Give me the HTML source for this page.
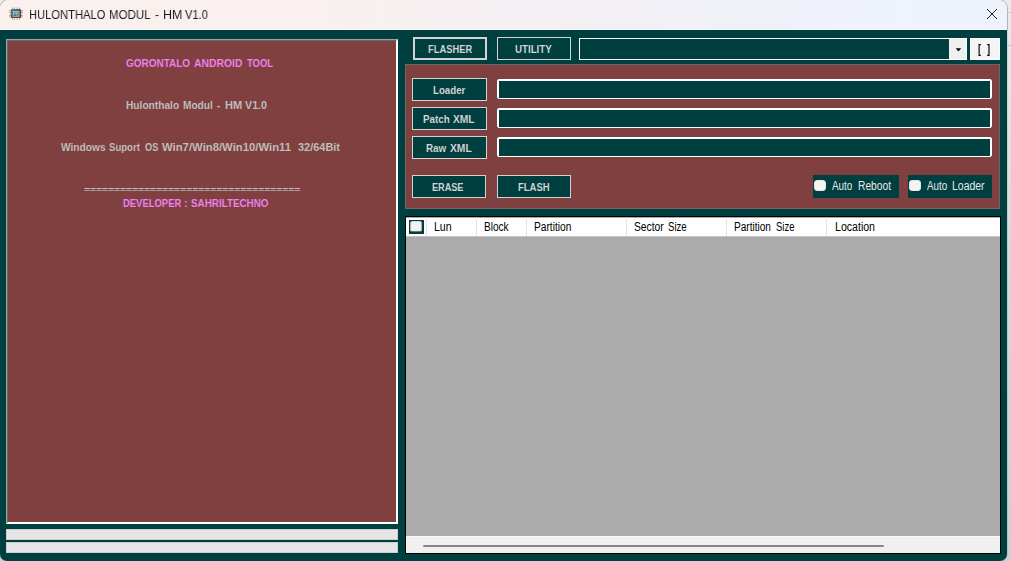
<!DOCTYPE html>
<html lang="en">
<head>
<meta charset="utf-8">
<title>HULONTHALO MODUL - HM V1.0</title>
<style>
*{box-sizing:border-box;margin:0;padding:0}
html,body{width:1011px;height:561px;overflow:hidden}
body{position:relative;background:linear-gradient(180deg,#ebebeb 0%,#e2e2e2 22%,#d8d8d8 50%,#d3d3d3 80%,#d0d0d0 100%);font-family:"Liberation Sans",sans-serif}
.abs{position:absolute}
#win{position:absolute;left:0;top:0;width:1007px;height:561px;background:linear-gradient(180deg,#f4f1f5 0,#f4f1f5 29px,#003f40 29px);border-radius:9px 8.5px 7px 7px;overflow:hidden}
#title{position:absolute;left:0;top:0;width:1007px;height:30px;background:linear-gradient(90deg,#faf1ee 0%,#f9f0ef 30%,#f4f0f4 55%,#eff2fa 80%,#eef3fb 100%);border-bottom:1px solid #fcfbfb}
.t{position:absolute;white-space:pre;transform-origin:0 0;display:block;line-height:1}
.b{font-weight:bold}
.g{will-change:transform}
.m{-webkit-text-stroke:0.08px #804040}
.k{-webkit-text-stroke:0.05px #003f40}
/* left panel */
#lp{position:absolute;left:6px;top:39px;width:392px;height:485px;background:#804040;border-style:solid;border-width:1px;border-color:#a0a0a0 #fff #fff #a0a0a0}
#lp i{position:absolute;left:0;top:0;right:0;bottom:0;border-style:solid;border-width:1px;border-color:#696969 #fff #fff #696969}
.pb{position:absolute;left:6px;width:392px;height:11px;background:#e6e6e6;border:1px solid #d0cdcd}
.btn{position:absolute;height:23px;border:1px solid #d6d2d2;background:#003f40;color:#d4d4d4;font-weight:bold;font-size:10.5px}
#gp{position:absolute;left:405px;top:64px;width:595px;height:145px;background:#804040;border:1px solid #746464}
.tb{position:absolute;left:497px;width:495px;height:19.7px;background:#003f40}
.tb:before{content:"";position:absolute;left:0;top:0;right:0;bottom:0;border:solid #fff;border-width:2px 2px 1.7px 2px;border-radius:2px}
.cb{position:absolute;top:175px;height:23px;background:#003f40}
.cb u{position:absolute;left:1px;top:4.7px;width:11.5px;height:11.5px;border-radius:3px;background:#f4f4f4;border:1px solid #e4e4e4}
#grid{position:absolute;left:405px;top:216px;width:596px;height:338px;border:1px solid #000;background:#ababab}
#gh{position:absolute;left:0;top:0;width:594px;height:19px;background:#fff}
#gh s{position:absolute;top:0;width:1px;height:19px;background:#e2e2e2}
#sb{position:absolute;left:0;top:319px;width:594px;height:17px;background:#f0f0f0;border-top:1px solid #fbfbfb}
</style>
</head>
<body>
<div class="abs" style="left:-1px;top:-1px;width:1009px;height:563px;border-radius:10px 9.5px 8px 8px;border:1px solid rgba(40,20,20,0.1)"></div>
<div class="abs" style="left:0;top:0;width:1011px;height:30px;overflow:hidden"><div class="abs" style="left:-1px;top:-1px;width:1009px;height:563px;border-radius:10px 9.5px 8px 8px;border:1px solid rgba(0,0,0,0.17)"></div></div>
<div class="abs" style="left:1008px;top:45px;width:3px;height:1px;background:#c4c4c4"></div>
<div class="abs" style="left:1007px;top:12px;width:4px;height:1px;background:#cfcfcf"></div>
<div id="win">
 <div id="title">
  <svg class="abs" style="left:8px;top:6px" width="16" height="16" viewBox="0 0 16 16">
   <defs><linearGradient id="bg" x1="0" y1="0" x2="1" y2="1"><stop offset="0" stop-color="#2a8cc8"/><stop offset="0.5" stop-color="#3058b8"/><stop offset="1" stop-color="#3a30a8"/></linearGradient>
   <linearGradient id="cy" x1="0" y1="0" x2="0" y2="1"><stop offset="0" stop-color="#48d0f4"/><stop offset="0.55" stop-color="#3a78d8"/><stop offset="1" stop-color="#2c30b8"/></linearGradient></defs>
   <g fill="#d8a828">
    <rect x="3.9" y="1.5" width="1" height="2"/><rect x="5.9" y="1.5" width="1" height="2"/><rect x="8.6" y="1.5" width="1" height="2"/><rect x="11" y="1.5" width="1" height="2"/>
    <rect x="3.9" y="11.6" width="1" height="2.3"/><rect x="5.9" y="11.6" width="1" height="2.3"/><rect x="8.6" y="11.6" width="1" height="2.3"/><rect x="11" y="11.6" width="1" height="2.3"/>
    <rect x="1.1" y="4.1" width="2" height="1"/><rect x="1.1" y="6" width="2" height="1"/><rect x="1.1" y="8.9" width="2" height="1"/><rect x="1.1" y="10.6" width="2" height="0.8"/>
    <rect x="12.9" y="4.1" width="2" height="1"/><rect x="12.9" y="6" width="2" height="1"/><rect x="12.9" y="8.9" width="2" height="1"/><rect x="12.9" y="10.6" width="2" height="0.8"/>
   </g>
   <rect x="2.8" y="3" width="10.4" height="9.1" rx="1.3" fill="url(#bg)"/>
   <rect x="4.8" y="5" width="6.6" height="5.9" fill="#e0b030"/>
   <text x="8.15" y="10.1" font-family="Liberation Sans, sans-serif" font-weight="bold" font-size="5.6" text-anchor="middle" fill="url(#cy)" stroke="url(#cy)" stroke-width="0.35" textLength="5.2" lengthAdjust="spacingAndGlyphs">ST</text>
  </svg>
  
  <span class="t g" style="left:28.91px;top:9.00px;font-size:12.5px;color:#1b1b1b;transform:scaleX(0.8937)">HULONTHALO</span>
  <span class="t g" style="left:108.68px;top:9.00px;font-size:12.5px;color:#1b1b1b;transform:scaleX(0.9188)">MODUL</span>
  <span class="t g" style="left:155.30px;top:9.00px;font-size:12.5px;color:#1b1b1b;transform:scaleX(0.9500)">-</span>
  <span class="t g" style="left:162.61px;top:9.00px;font-size:12.5px;color:#1b1b1b;transform:scaleX(0.9929)">HM</span>
  <span class="t g" style="left:184.90px;top:9.00px;font-size:12.5px;color:#1b1b1b;transform:scaleX(0.8889)">V1.0</span>
 
  <svg class="abs" style="left:986px;top:8px" width="12" height="12" viewBox="0 0 12 12"><path d="M1 1 L11 11 M11 1 L1 11" stroke="#1a1a1a" stroke-width="1" fill="none"/></svg>
 </div>

 <div id="lp"><i></i>
  <span class="t b m" style="left:119.30px;top:18.00px;font-size:11px;color:#ee82ee;transform:scaleX(0.9055)">GORONTALO</span>
  <span class="t b m" style="left:187.10px;top:18.00px;font-size:11px;color:#ee82ee;transform:scaleX(0.9438)">ANDROID</span>
  <span class="t b m" style="left:239.60px;top:18.00px;font-size:11px;color:#ee82ee;transform:scaleX(0.8618)">TOOL</span>
  <span class="t b m" style="left:119.30px;top:60.00px;font-size:11px;color:#c0c0c0;transform:scaleX(0.9253)">Hulonthalo</span>
  <span class="t b m" style="left:176.30px;top:60.00px;font-size:11px;color:#c0c0c0;transform:scaleX(0.9189)">Modul</span>
  <span class="t b m" style="left:209.80px;top:60.00px;font-size:11px;color:#c0c0c0;transform:scaleX(1.0000)">-</span>
  <span class="t b m" style="left:217.70px;top:60.00px;font-size:11px;color:#c0c0c0;transform:scaleX(1.0092)">HM</span>
  <span class="t b m" style="left:238.30px;top:60.00px;font-size:11px;color:#c0c0c0;transform:scaleX(0.9729)">V1.0</span>
  <span class="t b m" style="left:53.50px;top:102.00px;font-size:11px;color:#c0c0c0;transform:scaleX(0.9260)">Windows</span>
  <span class="t b m" style="left:102.40px;top:102.00px;font-size:11px;color:#c0c0c0;transform:scaleX(0.8721)">Suport</span>
  <span class="t b m" style="left:137.60px;top:102.00px;font-size:11px;color:#c0c0c0;transform:scaleX(0.8357)">OS</span>
  <span class="t b m" style="left:154.60px;top:102.00px;font-size:11px;color:#c0c0c0;transform:scaleX(1.0280)">Win7/Win8/Win10/Win11</span>
  <span class="t b m" style="left:291.40px;top:102.00px;font-size:11px;color:#c0c0c0;transform:scaleX(0.9947)">32/64Bit</span>
  <span class="t b m" style="left:77.10px;top:146.00px;font-size:9px;color:#c0c0c0;transform:scaleX(1.1431)">====================================</span>
  <span class="t b m" style="left:116.40px;top:158.00px;font-size:11px;color:#ee82ee;transform:scaleX(0.8586)">DEVELOPER</span>
  <span class="t b m" style="left:177.10px;top:158.00px;font-size:11px;color:#ee82ee;transform:scaleX(1.0000)">:</span>
  <span class="t b m" style="left:183.80px;top:158.00px;font-size:11px;color:#ee82ee;transform:scaleX(0.8952)">SAHRILTECHNO</span>
 </div>
 <div class="pb" style="top:529px"></div>
 <div class="pb" style="top:542px"></div>

 <div class="btn" style="left:413px;top:37px;width:74px;border-width:2px"><span class="t b k" style="left:12.70px;top:5.00px;font-size:10.5px;color:#d4d4d4;transform:scaleX(0.8900)">FLASHER</span></div>
 <div class="btn" style="left:497px;top:37px;width:74px"><span class="t b k" style="left:17.40px;top:6.00px;font-size:10.5px;color:#d4d4d4;transform:scaleX(0.9254)">UTILITY</span></div>
 <div class="abs" style="left:579px;top:38px;width:388px;height:22px;border:1px solid #fff;background:#003f40">
   <div class="abs" style="right:0;top:0;width:17px;height:20px;background:#f0f0f0"></div>
   <svg class="abs" style="left:375px;top:9px" width="8" height="5" viewBox="0 0 8 5"><path d="M0.7 0.2 L6.2 0.2 L3.45 3.4 Z" fill="#000"/></svg>
 </div>
 <div class="abs" style="left:970px;top:38px;width:30px;height:22px;background:#f4f4f4;border:1px solid #fafafa"><span class="t b" style="left:7.10px;top:4.00px;font-size:12px;color:#000;transform:scaleX(0.7250)">[</span> <span class="t b" style="left:15.90px;top:4.00px;font-size:12px;color:#000;transform:scaleX(0.7500)">]</span></div>

 <div id="gp"></div>
 <div class="btn" style="left:412px;top:78px;width:75px"><span class="t b k" style="left:19.50px;top:6.00px;font-size:10.5px;color:#d4d4d4;transform:scaleX(0.9221)">Loader</span></div>
 <div class="btn" style="left:412px;top:107px;width:75px"><span class="t b k" style="left:10.40px;top:6.00px;font-size:10.5px;color:#d4d4d4;transform:scaleX(0.9333)">Patch</span> <span class="t b k" style="left:40.00px;top:6.00px;font-size:10.5px;color:#d4d4d4;transform:scaleX(0.9714)">XML</span></div>
 <div class="btn" style="left:412px;top:136px;width:75px"><span class="t b k" style="left:12.60px;top:6.00px;font-size:10.5px;color:#d4d4d4;transform:scaleX(0.9366)">Raw</span> <span class="t b k" style="left:37.10px;top:6.00px;font-size:10.5px;color:#d4d4d4;transform:scaleX(0.9802)">XML</span></div>
 <div class="tb" style="top:79px"></div>
 <div class="tb" style="top:108px"></div>
 <div class="tb" style="top:137px"></div>
 <div class="btn" style="left:412px;top:175px;width:74px"><span class="t b k" style="left:19.40px;top:6.00px;font-size:10.5px;color:#d4d4d4;transform:scaleX(0.8681)">ERASE</span></div>
 <div class="btn" style="left:497px;top:175px;width:74px"><span class="t b k" style="left:19.60px;top:6.00px;font-size:10.5px;color:#d4d4d4;transform:scaleX(0.9037)">FLASH</span></div>
 <div class="cb" style="left:813px;width:86px"><u></u><span class="t" style="left:19.20px;top:5.00px;font-size:12.5px;color:#e8e8e8;transform:scaleX(0.7919)">Auto</span> <span class="t" style="left:44.68px;top:5.00px;font-size:12.5px;color:#e8e8e8;transform:scaleX(0.8184)">Reboot</span></div>
 <div class="cb" style="left:908px;width:84px"><u></u><span class="t" style="left:19.40px;top:5.00px;font-size:12.5px;color:#e8e8e8;transform:scaleX(0.7841)">Auto</span> <span class="t" style="left:44.46px;top:5.00px;font-size:12.5px;color:#e8e8e8;transform:scaleX(0.8369)">Loader</span></div>

 <div id="grid">
  <div id="gh"><div class="abs" style="left:0;top:0;width:594px;height:1px;background:#a8a8a8"></div>
   <s style="left:20px"></s><s style="left:70px"></s><s style="left:120px"></s><s style="left:220px"></s><s style="left:320px"></s><s style="left:420px"></s>
   <div class="abs" style="left:3px;top:3px;width:15px;height:14px;background:#003f40"></div>
   <div class="abs" style="left:4px;top:3.7px;width:11.6px;height:11.6px;background:#f3f3f3;border-radius:2.5px;border:1px solid #b4b4b4;border-top-color:#d8d8d8;border-bottom-color:#707070"></div>
   
  <span class="t" style="left:28.20px;top:4.00px;font-size:12px;color:#000;transform:scaleX(0.8787)">Lun</span>
  <span class="t" style="left:78.40px;top:4.00px;font-size:12px;color:#000;transform:scaleX(0.8404)">Block</span>
  <span class="t" style="left:128.30px;top:4.00px;font-size:12px;color:#000;transform:scaleX(0.8490)">Partition</span>
  <span class="t" style="left:228.00px;top:4.00px;font-size:12px;color:#000;transform:scaleX(0.8563)">Sector</span>
  <span class="t" style="left:262.20px;top:4.00px;font-size:12px;color:#000;transform:scaleX(0.7985)">Size</span>
  <span class="t" style="left:328.40px;top:4.00px;font-size:12px;color:#000;transform:scaleX(0.8374)">Partition</span>
  <span class="t" style="left:369.50px;top:4.00px;font-size:12px;color:#000;transform:scaleX(0.7900)">Size</span>
  <span class="t" style="left:428.50px;top:4.00px;font-size:12px;color:#000;transform:scaleX(0.8815)">Location</span>
 
  </div>
  <div class="abs" style="left:0;top:19px;width:594px;height:1px;background:#c4c4c4"></div>
  <div id="sb"><div class="abs" style="left:17px;top:8px;width:461px;height:2px;background:#868686;border-radius:1px"></div></div>
 </div>

</div>
</body>
</html>
